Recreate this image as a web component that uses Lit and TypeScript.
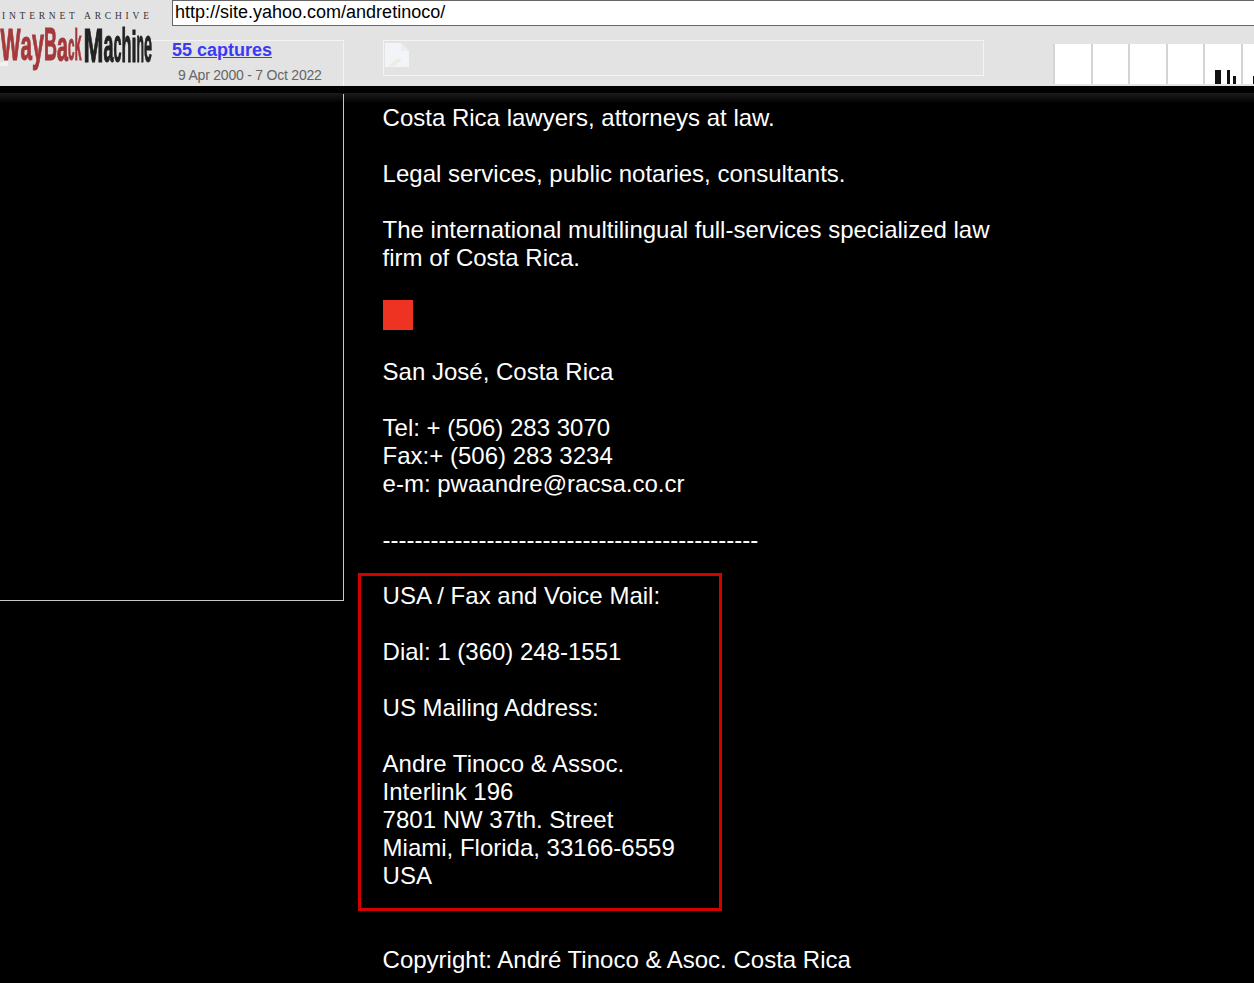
import { LitElement, html, css, svg } from "lit";
import { customElement } from "lit/decorators.js";

const adv: Record<string, number> = { W: 0.944, a: 0.556, y: 0.556, B: 0.722, c: 0.556, k: 0.556, M: 0.833, h: 0.611, i: 0.278, n: 0.611, e: 0.556 };

const logo: [string, number, number, number, number][] = [
  // char, x, width, font-size, baseline
  ["W", 0.5, 20, 44, 59.5],
  ["a", 20.5, 11.5, 42, 60],
  ["y", 32, 12, 46, 59.5],
  ["B", 44, 13, 46, 59.5],
  ["a", 57, 11, 42, 61],
  ["c", 68, 6.5, 38, 60],
  ["k", 74.5, 7, 45, 60],
  ["M", 83.5, 20, 48, 61.5],
  ["a", 103.5, 10, 48, 61.5],
  ["c", 113.5, 8, 48, 61.5],
  ["h", 121.5, 10, 48, 61.5],
  ["i", 131.5, 5, 44, 61.5],
  ["n", 136.5, 7.5, 48, 61.5],
  ["e", 144, 8, 48, 61.5],
];

type Bar = { h: number; kind: string };
const cells: Bar[][] = [
  [],
  [],
  [],
  [],
  [
    { h: 14, kind: "wide" },
    { h: 14, kind: "far" },
    { h: 8, kind: "near" },
  ],
  [{ h: 8, kind: "wide" }],
];

@customElement("app-root")
export class AppRoot extends LitElement {
  static styles = css`
    :host { display: block; width: 1254px; height: 983px; overflow: hidden; background: #000; font-family: "Liberation Sans", Arial, sans-serif; }
    .bar { position: relative; height: 86px; background: #e3e3e3; display: flex; overflow: hidden; }
    .brand { width: 172px; flex: none; position: relative; z-index: 1; }
    .brand svg { display: block; }
    .mark { filter: blur(0.35px); }
    .right { flex: 1; min-width: 0; }
    .url { box-sizing: border-box; width: 1100px; height: 26px; background: #fff; border: 1px solid #666; padding-left: 2px; font-size: 18px; line-height: 22px; color: #000; }
    .row { display: flex; margin-top: 14px; }
    .caps { box-sizing: border-box; width: 172px; height: 46px; border: 1px solid #f4f4f4; border-width: 1px 1px 0 0; position: relative; flex: none; }
    .caps::before { content: ""; position: absolute; top: -1px; left: -22px; width: 22px; height: 1px; background: #f4f4f4; }
    .caps a { display: block; margin-top: -1px; font-size: 18px; line-height: 20px; font-weight: 700; color: #3a3af5; text-decoration: underline; }
    .caps span { display: block; margin: 7px 0 0 6px; font-size: 14px; line-height: 16px; color: #666; letter-spacing: -0.22px; }
    .timeline { box-sizing: border-box; width: 601px; height: 36px; margin-left: 39px; border: 1px solid #f4f4f4; padding: 2px 0 0 1px; flex: none; }
    .timeline svg { display: block; }
    .spark { display: flex; margin: 4px 0 0 69px; flex: none; }
    .cell { box-sizing: border-box; width: 37.5px; height: 40px; background: #fff; border-left: 2px solid #d4d4d4; display: flex; align-items: flex-end; padding-left: 10px; flex: none; }
    .cell i { display: block; background: #111; }
    .cell i.wide { width: 6px; }
    .cell i.far { width: 3px; margin-left: 6px; }
    .cell i.near { width: 3px; margin-left: 3px; }
    .main { position: relative; display: flex; color: #fff; font-size: 24px; line-height: 28px; }
    .main::before { content: ""; position: absolute; top: 7px; left: 0; right: 0; height: 10px; background: linear-gradient(#1c1c1c, #000); }
    .side { position: relative; box-sizing: border-box; width: 344px; height: 515px; flex: none; }
    .side::after { content: ""; position: absolute; left: 0; right: 0; top: 8px; bottom: 0; border: solid #c8c8c8; border-width: 0 1px 1px 0; }
    .content { position: relative; margin-left: 14px; padding-top: 18px; width: 660px; }
    .t { margin: 0 0 0 24.6px; }
    .blank { height: 28px; }
    .red { width: 30px; height: 30px; background: #ef3322; margin-left: 25px; }
    .box { box-sizing: border-box; width: 364px; margin-top: 19px; border: 3px solid #d40000; padding: 6px 0 18px; }
    .box .t { margin-left: 21.6px; }
    .after { height: 35px; }
  `;

  render() {
    return html`
      <div class="bar">
        <div class="brand">
          <svg width="172" height="86" viewBox="0 0 172 86" role="img" aria-label="Internet Archive Wayback Machine">
            <text x="2" y="19" font-family="Liberation Serif" font-size="9.5" fill="#333" textLength="147">INTERNET ARCHIVE</text>
            <g class="mark">
              <path d="M0 66V63L8 60V66Z" fill="#f2f2f2" />
              ${logo.map(([c, x, w, fs, y], i) => {
                const color = i < 7 ? "#a4383a" : "#222";
                return svg`<text transform="translate(${x} ${y}) scale(${(w / (adv[c] * fs)).toFixed(3)} 1)" font-family="Liberation Sans" font-weight="700" font-size=${fs}
                  fill=${color} stroke=${color} stroke-width="1.1">${c}</text>`;
              })}
            </g>
          </svg>
        </div>
        <div class="right">
          <div class="url">http://site.yahoo.com/andretinoco/</div>
          <div class="row">
            <div class="caps">
              <a href="#">55 captures</a>
              <span>9 Apr 2000 - 7 Oct 2022</span>
            </div>
            <div class="timeline">
              <svg width="24" height="24" viewBox="0 0 24 24" aria-hidden="true">
                <path d="M0 0H16L24 8V24H0Z" fill="#f3f4f8" />
                <path d="M16 0V8H24Z" fill="#ededed" />
                <path d="M3 23L13 15L17 17L9 23Z" fill="#e8efe2" />
              </svg>
            </div>
            <div class="spark">
              ${cells.map(
                (bars) => html`<div class="cell">
                  ${bars.map((b) => html`<i class=${b.kind} style="height:${b.h}px"></i>`)}
                </div>`
              )}
            </div>
          </div>
        </div>
      </div>
      <div class="main">
        <div class="side"></div>
        <div class="content">
          <p class="t">Costa Rica lawyers, attorneys at law.</p>
          <div class="blank"></div>
          <p class="t">Legal services, public notaries, consultants.</p>
          <div class="blank"></div>
          <p class="t">The international multilingual full-services specialized law<br />firm of Costa Rica.</p>
          <div class="blank"></div>
          <div class="red"></div>
          <div class="blank"></div>
          <p class="t">San José, Costa Rica</p>
          <div class="blank"></div>
          <p class="t">Tel: + (506) 283 3070<br />Fax:+ (506) 283 3234<br />e-m: pwaandre@racsa.co.cr</p>
          <div class="blank"></div>
          <p class="t">-----------------------------------------------</p>
          <div class="box">
            <p class="t">USA / Fax and Voice Mail:</p>
            <div class="blank"></div>
            <p class="t">Dial: 1 (360) 248-1551</p>
            <div class="blank"></div>
            <p class="t">US Mailing Address:</p>
            <div class="blank"></div>
            <p class="t">Andre Tinoco &amp; Assoc.<br />Interlink 196<br />7801 NW 37th. Street<br />Miami, Florida, 33166-6559<br />USA</p>
          </div>
          <div class="after"></div>
          <p class="t">Copyright: André Tinoco &amp; Asoc. Costa Rica</p>
        </div>
      </div>
    `;
  }
}
